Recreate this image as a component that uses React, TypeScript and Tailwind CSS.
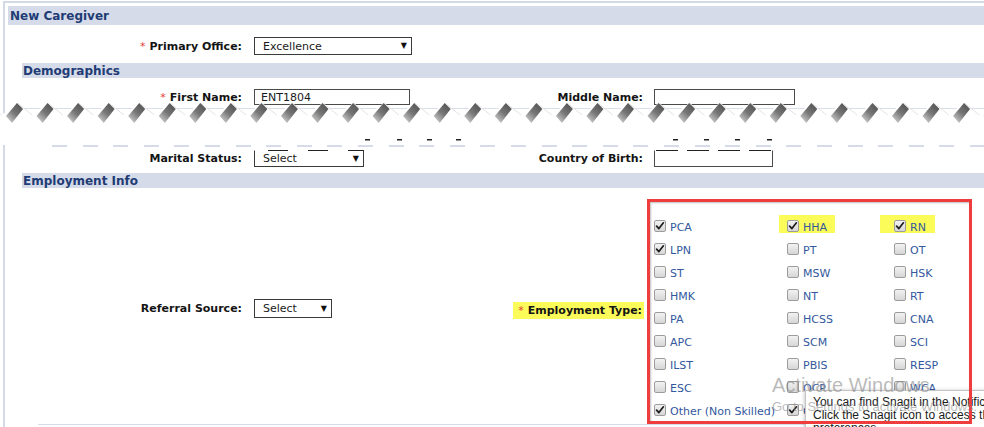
import React from 'react';

const Req = () => <span className="text-[#e2403a] font-normal mr-[4px]">*</span>;

function Label({ children, req }: { children: React.ReactNode; req?: boolean }) {
  return (
    <span className="text-[11px] font-bold text-[#141414] whitespace-nowrap leading-none">
      {req && <Req />}
      {children}
    </span>
  );
}

function SelectBox({ text, className, dashed }: { text: string; className: string; dashed?: boolean }) {
  return (
    <div
      className={`flex items-center justify-between border border-[#3a3a3a] bg-white pl-[8px] pr-[4px] ${className} ${
        dashed
          ? 'border-t-transparent bg-origin-border bg-no-repeat bg-top bg-[length:100%_1px] bg-[repeating-linear-gradient(90deg,transparent_0_14px,#222_14px_34px,transparent_34px_40px)]'
          : ''
      }`}
    >
      <span className="text-[11px] text-[#1a1a1a] leading-none">{text}</span>
      <span className="text-[8px] text-[#111] leading-none">▼</span>
    </div>
  );
}

function TextBox({ value, className, dashed }: { value?: string; className: string; dashed?: boolean }) {
  return (
    <div
      className={`flex items-center border border-[#4a4a4a] bg-white px-[6px] ${className} ${
        dashed
          ? 'border-t-transparent bg-origin-border bg-no-repeat bg-top bg-[length:100%_1px] bg-[repeating-linear-gradient(90deg,transparent_0_2px,#222_2px_24px,transparent_24px_31px)]'
          : ''
      }`}
    >
      <span className="text-[11px] text-[#1a1a1a] leading-none">{value}</span>
    </div>
  );
}

function Box({ checked }: { checked?: boolean }) {
  return (
    <span className="relative -top-[2px] flex h-[12px] w-[12px] shrink-0 items-center justify-center rounded-[2px] border border-[#9c9c9c] bg-gradient-to-b from-[#f2f2f2] to-[#d6d6d6]">
      {checked && (
        <svg width="10" height="10" viewBox="0 0 10 10">
          <path d="M1.6 5.2 L3.9 7.6 L8.4 1.8" fill="none" stroke="#1c1c1c" strokeWidth="1.7" strokeLinecap="round" strokeLinejoin="round" />
        </svg>
      )}
    </span>
  );
}

type Item = { label: string; checked?: boolean; hl?: 'a' | 'b' };

const rows: Item[][] = [
  [{ label: 'PCA', checked: true }, { label: 'HHA', checked: true, hl: 'a' }, { label: 'RN', checked: true, hl: 'b' }],
  [{ label: 'LPN', checked: true }, { label: 'PT' }, { label: 'OT' }],
  [{ label: 'ST' }, { label: 'MSW' }, { label: 'HSK' }],
  [{ label: 'HMK' }, { label: 'NT' }, { label: 'RT' }],
  [{ label: 'PA' }, { label: 'HCSS' }, { label: 'CNA' }],
  [{ label: 'APC' }, { label: 'SCM' }, { label: 'SCI' }],
  [{ label: 'ILST' }, { label: 'PBIS' }, { label: 'RESP' }],
  [{ label: 'ESC' }, { label: 'OCP' }, { label: 'WCA' }],
  [{ label: 'Other (Non Skilled)', checked: true }, { label: 'OTH', checked: true }, { label: '' }],
];

function Cell({ item }: { item: Item }) {
  return (
    <div className="flex h-[23px] items-center">
      <div className="relative inline-flex h-[23px] items-center">
        {item.hl === 'a' && <span className="absolute left-[-8px] right-[-8px] top-[-1px] h-[18px] bg-[#fbfb5a]" />}
        {item.hl === 'b' && <span className="absolute left-[-14px] right-[-9px] top-[-1px] h-[18px] bg-[#fbfb5a]" />}
        <span className="relative flex items-center gap-[4px]">
          <Box checked={item.checked} />
          <span className="text-[11px] text-[#33589d] whitespace-nowrap leading-none">{item.label}</span>
        </span>
      </div>
    </div>
  );
}

function Tear() {
  const P = 30.55;
  const ks = Array.from({ length: 35 }, (_, i) => i - 1);
  let d = 'M -20 18';
  ks.forEach((k) => {
    const p = 17 + P * k;
    d += ` L ${p} 5 L ${p + P / 2} 17`;
  });
  d += ' L 1010 17 L 1010 45 L -20 45 Z';
  const ticks = [365, 397, 427, 456, 673, 704, 735, 767];
  return (
    <svg className="absolute left-0 top-[98px]" width="984" height="45" viewBox="0 0 984 45">
      <defs>
        <linearGradient id="sh" x1="0.85" y1="0" x2="0.1" y2="1">
          <stop offset="0" stopColor="#505050" />
          <stop offset="0.5" stopColor="#777" />
          <stop offset="1" stopColor="#d8d8d8" />
        </linearGradient>
        <filter id="bl" x="-0.2" y="-0.2" width="1.4" height="1.4">
          <feGaussianBlur stdDeviation="0.6" />
        </filter>
      </defs>
      <path d={d} fill="#fff" />
      {ks.map((k) => {
        const p = 17 + P * k;
        return (
          <g key={k}>
            <polygon
              points={`${p},5 ${p + 6},11 ${p - 5},25 ${p - 11},18`}
              fill="url(#sh)"
              filter="url(#bl)"
            />
            <line x1={p + 1} y1={5.5} x2={p + P / 2} y2={17} stroke="#dcdcdc" strokeWidth="0.8" />
          </g>
        );
      })}
      {ticks.map((x) => (
        <rect key={x} x={x} y={41} width={5} height={1.5} fill="#222" />
      ))}
    </svg>
  );
}

export default function App() {
  return (
    <div className="relative h-[427px] w-[984px] overflow-hidden bg-white font-['DejaVu_Sans',sans-serif]">
      {/* upper piece */}
      <div className="relative h-[143px] overflow-hidden pt-px">
        <div className="ml-[3px] h-[160px] border-l-2 border-t-2 border-[#d3d9e6]">
          <div className="ml-[3px] mt-[3px] flex h-[19px] items-center bg-[#d5dbe8] pl-[2px]">
            <span className="text-[12px] font-bold text-[#1f3c75]">New Caregiver</span>
          </div>

          <div className="mt-[12px] flex h-[18px] items-center">
            <div className="flex w-[237px] justify-end">
              <Label req>Primary Office:</Label>
            </div>
            <div className="ml-[12px]">
              <SelectBox text="Excellence" className="h-[18px] w-[158px]" />
            </div>
          </div>

          <div className="ml-[17px] mt-[8px] flex h-[15px] items-center bg-[#d5dbe8] pl-px">
            <span className="text-[12px] font-bold text-[#1f3c75]">Demographics</span>
          </div>

          <div className="mt-[11px] flex h-[16px] items-center">
            <div className="flex w-[237px] justify-end">
              <Label req>First Name:</Label>
            </div>
            <div className="ml-[12px] w-[260px]">
              <TextBox value="ENT1804" className="h-[16px] w-[156px]" />
            </div>
            <div className="flex w-[129px] justify-end">
              <Label>Middle Name:</Label>
            </div>
            <div className="ml-[11px]">
              <TextBox className="h-[16px] w-[141px]" />
            </div>
          </div>
          <div className="ml-[17px] mt-[3px] h-px bg-[#d8deea]" />
        </div>
        <Tear />
      </div>

      {/* lower piece */}
      <div className="ml-[3px] h-[284px] border-l-2 border-[#d3d9e6]">
        <div className="ml-[47px] mt-[2px] h-[2px] bg-[repeating-linear-gradient(90deg,#d5dbe8_0_15px,transparent_15px_30.6px)]" />

        <div className="mt-[3px] flex h-[17px] items-center">
          <div className="flex w-[237px] justify-end">
            <Label>Marital Status:</Label>
          </div>
          <div className="ml-[12px] w-[260px]">
            <SelectBox text="Select" className="h-[17px] w-[110px]" dashed />
          </div>
          <div className="flex w-[129px] justify-end">
            <Label>Country of Birth:</Label>
          </div>
          <div className="ml-[11px]">
            <TextBox className="h-[17px] w-[119px]" dashed />
          </div>
        </div>

        <div className="ml-[17px] mt-[6px] flex h-[15px] items-center bg-[#d5dbe8] pl-px">
          <span className="text-[12px] font-bold text-[#1f3c75]">Employment Info</span>
        </div>

        <div className="mt-[11px] flex h-[225px] items-center">
          <div className="relative -top-[3px] flex items-center">
            <div className="flex w-[237px] justify-end">
              <Label>Referral Source:</Label>
            </div>
            <div className="ml-[12px] w-[259px]">
              <SelectBox text="Select" className="h-[19px] w-[78px]" />
            </div>
          </div>
          <div className="relative -top-[1px] flex h-[17px] w-[131px] items-center justify-end bg-[#fbfb5a] pr-[2px]">
            <Label req>Employment Type:</Label>
          </div>
          <div className="relative ml-[3px] h-[225px] w-[325px] border-[3px] border-transparent">
            <div className="pointer-events-none absolute -inset-[3px] z-30 border-[3px] border-[#ef3c3c] shadow-[inset_1px_1px_2px_rgba(0,0,0,0.25)]" />
            <div className="grid grid-cols-[133px_107px_1fr] pl-[4px] pt-[14px]">
              {rows.map((r, i) => (
                <React.Fragment key={i}>
                  {r.map((it, j) => (
                    <Cell key={j} item={it} />
                  ))}
                </React.Fragment>
              ))}
            </div>
          </div>
        </div>
        <div className="ml-[33px] h-px bg-[#d5dbe8]" />
      </div>

      {/* snagit tooltip */}
      <div className="absolute left-[805px] top-[390px] z-20 h-[60px] w-[240px] border border-[#c4c4c4] bg-white pl-[7px] pt-[5px] shadow-[0_1px_4px_rgba(0,0,0,0.3)] font-['Liberation_Sans',sans-serif] text-[12px] leading-[13px] text-[#1b1b1b] whitespace-nowrap">
        <div>You can find Snagit in the Notification area.</div>
        <div>Click the Snagit icon to access the</div>
        <div>preferences.</div>
      </div>

      {/* windows watermark */}
      <div className="pointer-events-none absolute left-[772px] top-[375px] z-40 font-['Liberation_Sans',sans-serif] text-[rgba(140,140,140,0.6)] whitespace-nowrap">
        <div className="text-[20px] leading-[20px]">Activate Windows</div>
        <div className="mt-[5px] text-[13px] leading-[13px]">Go to Settings to activate Windows.</div>
      </div>
    </div>
  );
}
